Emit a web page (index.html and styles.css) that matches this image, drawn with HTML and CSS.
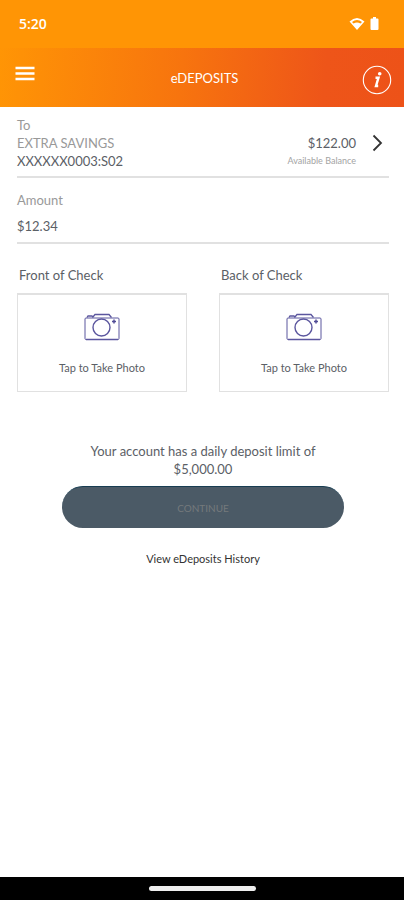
FILE: index.html
```
<!DOCTYPE html>
<html lang="en">
<head>
<meta charset="utf-8">
<meta name="viewport" content="width=device-width, initial-scale=1">
<title>eDeposits</title>
<link rel="stylesheet" href="styles.css">
</head>
<body>
<div class="status">
  <span class="time">5:20</span>
  <div class="status-icons">
    <svg width="16" height="14" viewBox="0 0 16 14" aria-hidden="true"><path fill="#fff" fill-rule="evenodd" d="M.5 4.500Q8-2.500 15.500 4.500L8 13ZM3 5Q8 1 13 5L11.500 6.500Q8 4.500 4.500 6.500Z"/></svg>
    <svg width="9" height="14" viewBox="0 0 9 14" aria-hidden="true"><path fill="#fff" d="M3 0h3v1.500h1.500q1 0 1 1V12q0 1-1 1h-6q-1 0-1-1V2.500q0-1 1-1H3Z"/></svg>
  </div>
</div>
<header class="header">
  <button class="icon-button menu" aria-label="Menu">
    <svg width="20" height="15" viewBox="0 0 20 15"><path d="M.5 2h19M.5 7.500h19M.5 13h19" stroke="#fff" stroke-width="2.500"/></svg>
  </button>
  <h1 class="title">eDEPOSITS</h1>
  <button class="icon-button info" aria-label="Information">
    <svg width="30" height="30" viewBox="0 0 30 30"><circle cx="15" cy="15" r="13.700" fill="none" stroke="#fff" stroke-width="1.100"/><circle cx="17.700" cy="8.800" r="1.800" fill="#fff"/><path d="M13.500 12.700h3l-2.500 8.300h2.200" fill="none" stroke="#fff" stroke-width="2.400"/></svg>
  </button>
</header>
<main class="main">
  <button class="account">
    <span class="account-name">
      <span class="muted">To</span>
      <span class="muted">EXTRA SAVINGS</span>
      <span>XXXXXX0003:S02</span>
    </span>
    <span class="balance">
      <span>$122.00</span>
      <span class="balance-label">Available Balance</span>
    </span>
    <svg class="chevron" width="11" height="18" viewBox="0 0 11 18" aria-hidden="true"><path d="M1.500 1.500L9 9l-7.500 7.500" fill="none" stroke="#333" stroke-width="1.800"/></svg>
  </button>
  <div class="amount">
    <label class="muted" for="amount">Amount</label>
    <input id="amount" type="text" inputmode="decimal" value="$12.34">
  </div>
  <div class="photos">
    <section class="photo">
      <h2 id="front">Front of Check</h2>
      <button class="capture" aria-describedby="front">
        <svg width="36" height="28" viewBox="0 0 36 28" aria-hidden="true"><g fill="none" stroke="#5b569e"><rect x="1" y="5" width="34" height="21.500" rx="1"/><path d="M2 26.500h32M3 4.500l1-1.500h4l1 1.500M8.500 4.500l2.500-3h14l2.500 3" stroke-width="1.300"/><circle cx="17.500" cy="14.500" r="8.500" stroke-width="1.400"/></g><path d="M30 6.500v4M28 8.500h4" stroke="#514c96" stroke-width="1.500"/></svg>
        <span>Tap to Take Photo</span>
      </button>
    </section>
    <section class="photo">
      <h2 id="back">Back of Check</h2>
      <button class="capture" aria-describedby="back">
        <svg width="36" height="28" viewBox="0 0 36 28" aria-hidden="true"><g fill="none" stroke="#5b569e"><rect x="1" y="5" width="34" height="21.500" rx="1"/><path d="M2 26.500h32M3 4.500l1-1.500h4l1 1.500M8.500 4.500l2.500-3h14l2.500 3" stroke-width="1.300"/><circle cx="17.500" cy="14.500" r="8.500" stroke-width="1.400"/></g><path d="M30 6.500v4M28 8.500h4" stroke="#514c96" stroke-width="1.500"/></svg>
        <span>Tap to Take Photo</span>
      </button>
    </section>
  </div>
  <div class="actions">
    <p class="limit">Your account has a daily deposit limit of $5,000.00</p>
    <button class="continue" disabled>CONTINUE</button>
    <a class="history" href="#history">View eDeposits History</a>
  </div>
</main>
<footer class="nav-bar"><span class="handle"></span></footer>
</body>
</html>
```
FILE: styles.css
```
* { box-sizing: border-box; }

body {
  margin: 0;
  min-height: 100vh;
  display: flex;
  flex-direction: column;
  background: #fff;
  color: #5b6066;
  font: 13px/18px Lato, "Open Sans", sans-serif;
}

button, input {
  margin: 0;
  padding: 0;
  border: 0;
  background: none;
  color: inherit;
  font: inherit;
}

svg { display: block; }

.status {
  height: 48px;
  padding: 0 25px 0 19px;
  display: flex;
  align-items: center;
  justify-content: space-between;
  background: #ff9505;
  color: #fff;
}

.time { font: 600 14px/18px "Open Sans", sans-serif; }

.status-icons { display: flex; gap: 5px; }

.header {
  height: 59px;
  padding: 0 12px 0 15px;
  display: grid;
  grid-template-columns: 32px 1fr 30px;
  align-items: center;
  background: linear-gradient(95deg, #ff9505, #f7740e 45%, #ee5519 80%, #ed5218);
  color: #fff;
}

.menu { justify-self: start; padding-bottom: 8px; }

.info { padding-top: 4px; }

.title {
  margin: 0;
  font: 400 13px/18px Lato, sans-serif;
  text-align: center;
}

.main { flex: 1; padding: 0 15px 0 17px; }

.account {
  width: 100%;
  padding: 9px 6px 6px 0;
  display: flex;
  align-items: center;
  border-bottom: 2px solid #e1e1e1;
  text-align: left;
}

.account-name {
  flex: 1;
  display: flex;
  flex-direction: column;
}

.muted { color: #999; }

.balance {
  align-self: flex-end;
  display: flex;
  flex-direction: column;
  text-align: right;
}

.balance-label { color: #a3a3a3; font-size: 9px; }

.chevron { margin-left: 16px; }

.amount {
  padding: 13px 0 7px;
  display: flex;
  flex-direction: column;
  gap: 8px;
  border-bottom: 2px solid #e1e1e1;
}

.amount input { height: 18px; width: 100%; }

.photos {
  padding-top: 22px;
  display: grid;
  grid-template-columns: 1fr 1fr;
  gap: 32px;
}

.photo h2 {
  margin: 0 0 9px;
  padding-left: 2px;
  font-size: 13px;
  font-weight: 400;
}

.capture {
  width: 100%;
  padding: 18px 0 14px;
  display: flex;
  flex-direction: column;
  align-items: center;
  gap: 18px;
  border: 1px solid #e1e1e1;
  border-top-width: 2px;
  font-size: 11px;
}

.actions {
  padding-top: 50px;
  display: flex;
  flex-direction: column;
  align-items: center;
}

.limit {
  max-width: 240px;
  margin: 0 0 8px;
  text-align: center;
}

.continue {
  width: 76%;
  height: 42px;
  margin-bottom: 22px;
  border-top: 1px solid #183d52;
  border-radius: 21px;
  background: #4b5a66;
  color: #74797c;
  font-size: 10px;
}

.history {
  color: #333;
  font-size: 11px;
  text-decoration: none;
}

.nav-bar {
  height: 23px;
  display: flex;
  align-items: center;
  justify-content: center;
  background: #000;
}

.handle {
  width: 107px;
  height: 5px;
  border-radius: 3px;
  background: #eee;
}
```
